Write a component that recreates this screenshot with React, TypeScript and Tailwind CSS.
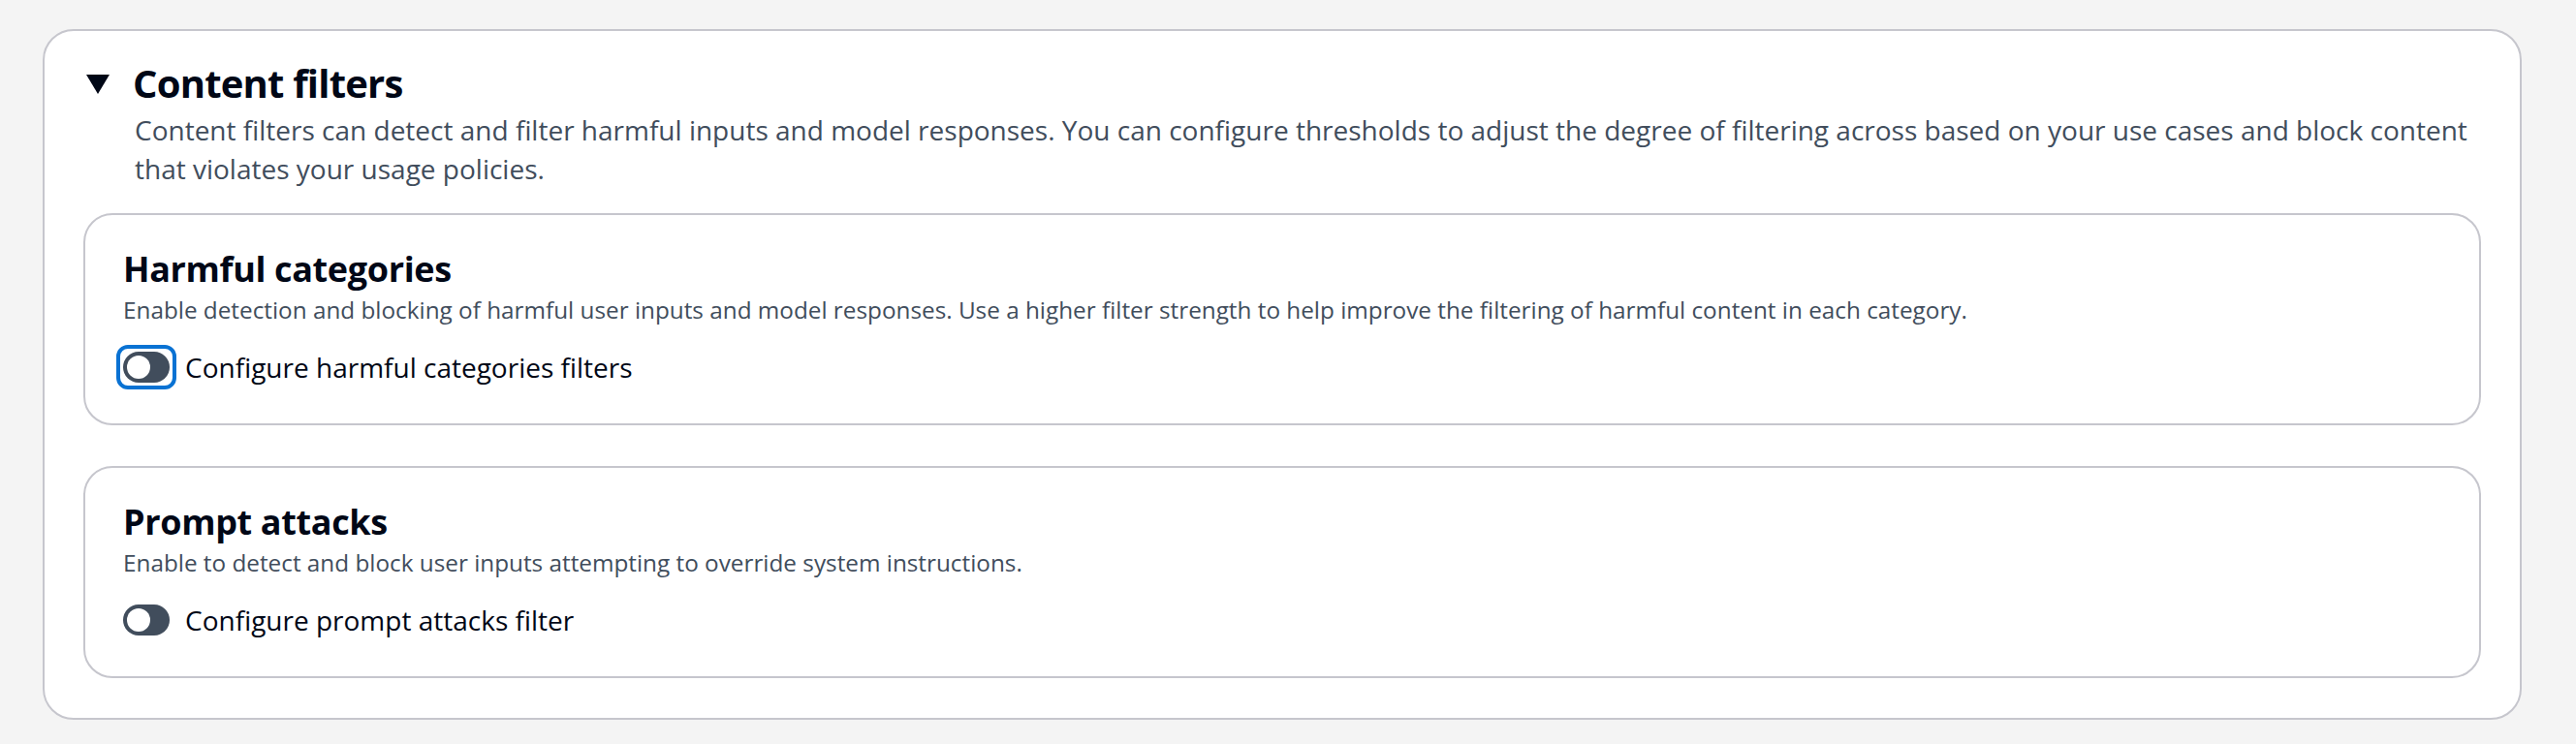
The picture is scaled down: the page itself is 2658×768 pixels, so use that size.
import React from "react";

function Toggle({ focused, label }: { focused?: boolean; label: string }) {
  return (
    <div className="flex h-[40px] items-center">
      <div className="relative h-[32px] w-[48px] shrink-0">
        {focused && (
          <div className="absolute -inset-[7px] rounded-[12px] border-[4px] border-[#0972d3]" />
        )}
        <div className="absolute inset-0 rounded-full bg-[#414d5c]" />
        <div className="absolute left-[4px] top-[4px] h-[24px] w-[24px] rounded-full bg-white" />
      </div>
      <span className="ml-[16px] text-[28px] leading-[40px] text-[#000716]">{label}</span>
    </div>
  );
}

function InnerCard({
  title,
  desc,
  toggle,
  focused,
}: {
  title: string;
  desc: string;
  toggle: string;
  focused?: boolean;
}) {
  return (
    <div className="rounded-[30px] border-2 border-[#c6c6cd] bg-white px-[39px] pb-[38px] pt-[34px]">
      <h3 className="text-[36px] font-bold leading-[44px] tracking-[-0.01em] text-[#000716]">{title}</h3>
      <p className="mt-[4px] text-[24.3px] leading-[32px] text-[#414d5c]">{desc}</p>
      <div className="mt-[23px]">
        <Toggle focused={focused} label={toggle} />
      </div>
    </div>
  );
}

export default function App() {
  return (
    <div
      className="min-h-screen bg-[#f4f4f4] pl-[44px] pr-[56px] pt-[30px]"
      style={{ fontFamily: '"Open Sans", "Noto Sans", sans-serif' }}
    >
      <div className="rounded-[32px] border-2 border-[#c6c6cd] bg-white px-[40px] pb-[41px] pt-[30px]">
        <div className="flex items-start">
          <svg
            className="ml-[3px] mr-[24px] mt-[15px] shrink-0"
            width="24"
            height="20"
            viewBox="0 0 24 20"
          >
            <path d="M0 0 H24 L12 20 Z" fill="#000716" />
          </svg>
          <h2 className="text-[40px] font-bold leading-[48px] tracking-[-0.02em] text-[#000716]">Content filters</h2>
        </div>
        <p className="mt-[4px] pl-[53px] text-[28px] leading-[40px] text-[#414d5c]">
          Content filters can detect and filter harmful inputs and model responses. You can configure thresholds to adjust the degree of filtering across based on your use cases and block content
          <br />
          that violates your usage policies.
        </p>
        <div className="mt-[26px] flex flex-col gap-[42px]">
          <InnerCard
            title="Harmful categories"
            desc="Enable detection and blocking of harmful user inputs and model responses. Use a higher filter strength to help improve the filtering of harmful content in each category."
            toggle="Configure harmful categories filters"
            focused
          />
          <InnerCard
            title="Prompt attacks"
            desc="Enable to detect and block user inputs attempting to override system instructions."
            toggle="Configure prompt attacks filter"
          />
        </div>
      </div>
    </div>
  );
}
